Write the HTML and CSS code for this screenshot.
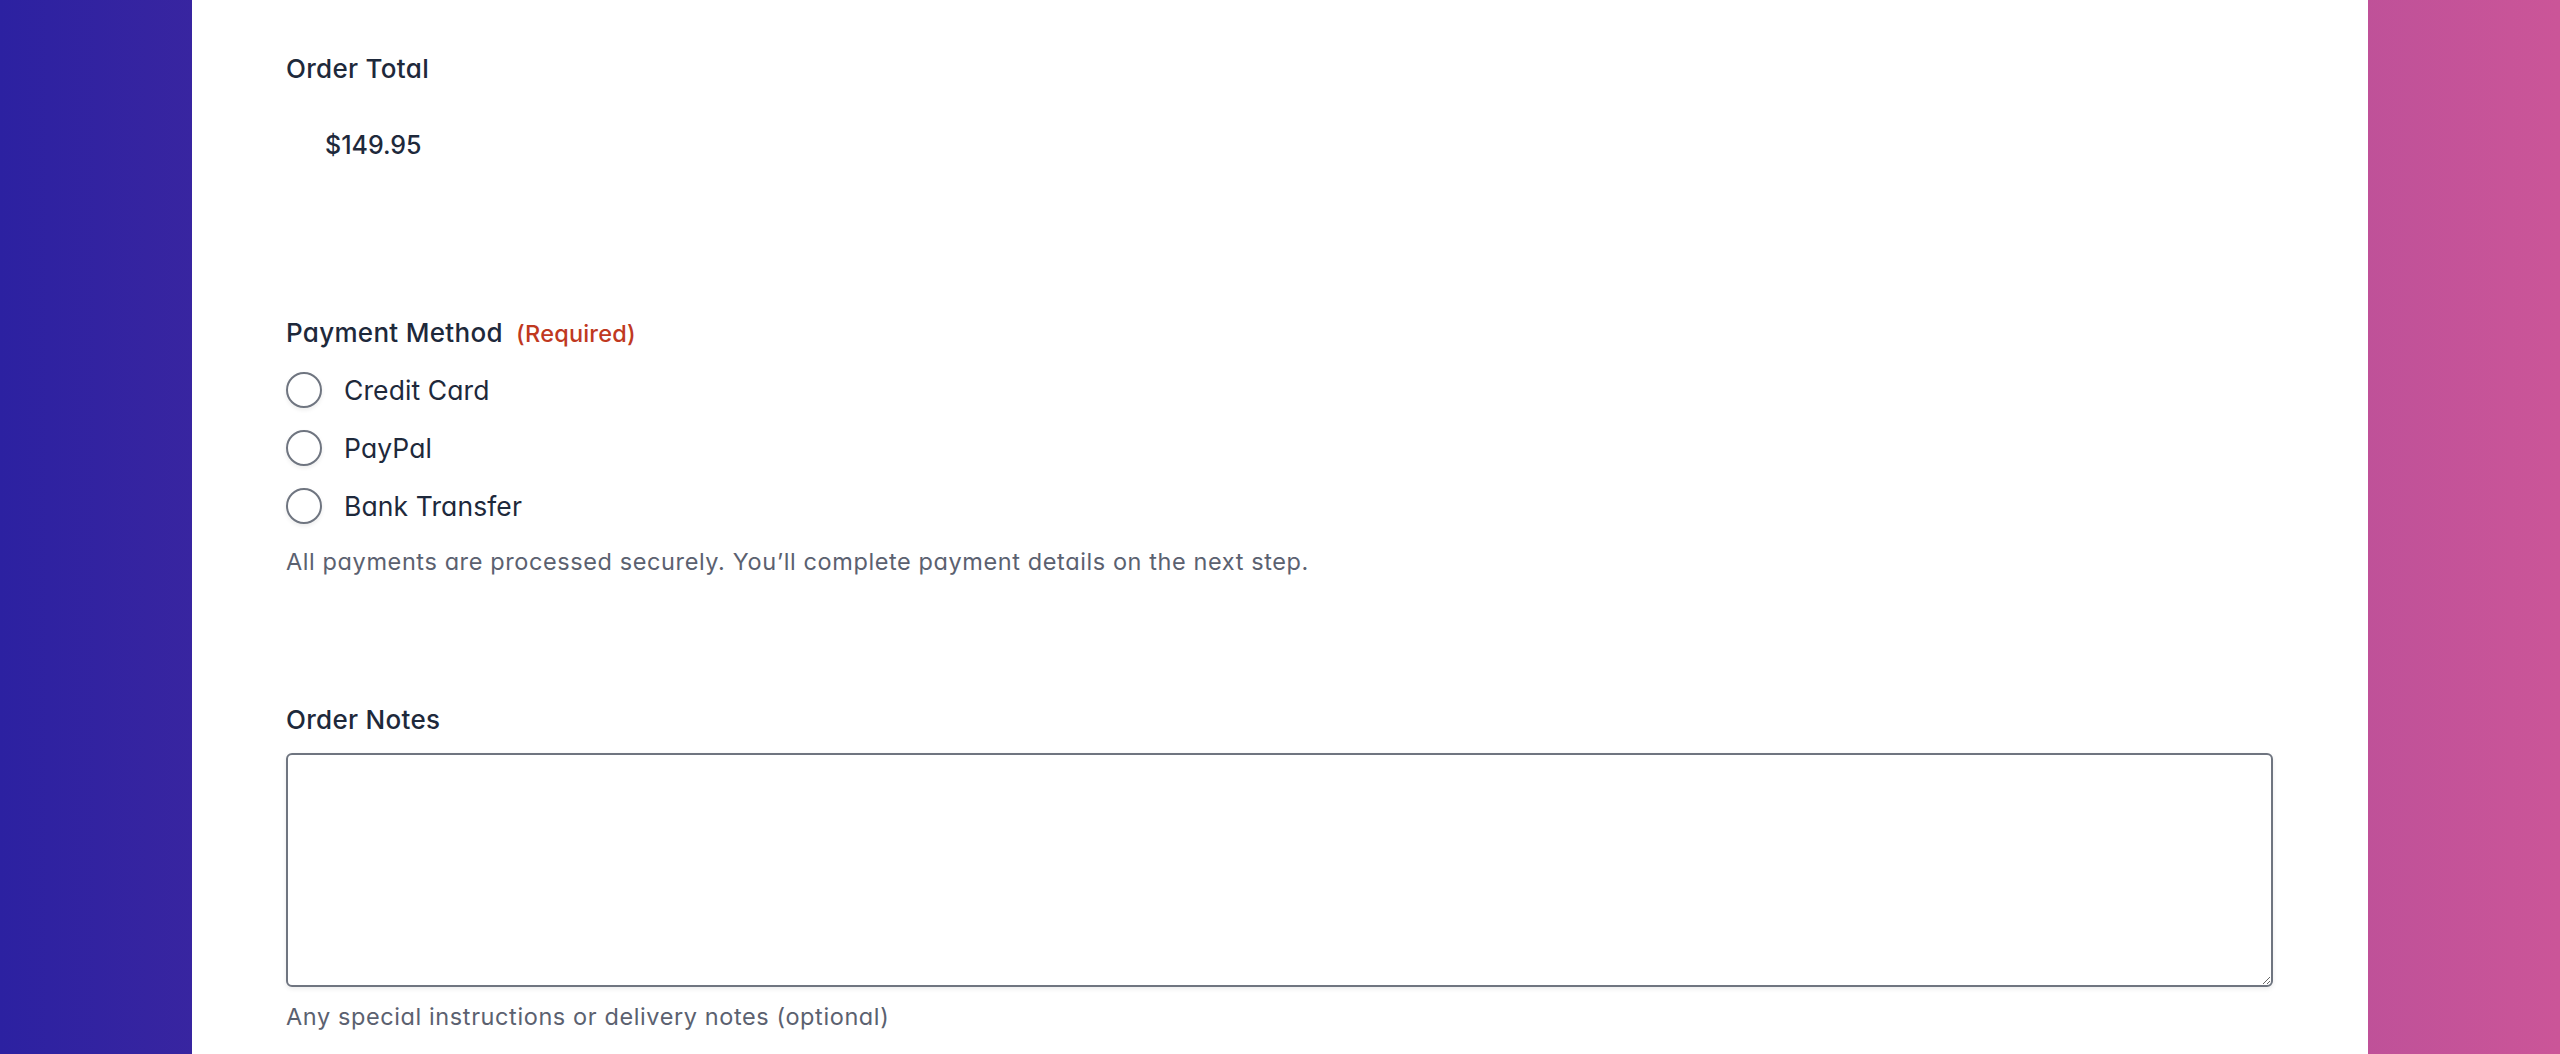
FILE: index.html
```html
<!DOCTYPE html>
<html lang="en">
<head>
<meta charset="utf-8">
<title>Checkout</title>
<link rel="stylesheet" href="styles.css">
</head>
<body>
<main class="card">
  <section class="field field-total">
    <div class="label">Order Total</div>
    <div class="amount">$149.95</div>
  </section>

  <fieldset class="field field-payment">
    <legend class="label">Payment Method <span class="required">(Required)</span></legend>
    <div class="options">
      <label class="option"><input type="radio" name="pay" class="radio"><span>Credit Card</span></label>
      <label class="option"><input type="radio" name="pay" class="radio"><span>PayPal</span></label>
      <label class="option"><input type="radio" name="pay" class="radio"><span>Bank Transfer</span></label>
    </div>
    <p class="help">All payments are processed securely. You’ll complete payment details on the next step.</p>
  </fieldset>

  <section class="field field-notes">
    <label class="label" for="notes">Order Notes</label>
    <textarea id="notes" class="notes"></textarea>
    <p class="help">Any special instructions or delivery notes (optional)</p>
  </section>
</main>
</body>
</html>
```

FILE: styles.css
```css
* { box-sizing: border-box; }

html, body {
  margin: 0;
  height: 100%;
}

body {
  background: linear-gradient(90deg, #2c21a1 0%, #cb5598 100%);
  font-family: Inter, "Noto Sans", "Liberation Sans", sans-serif;
  font-feature-settings: "cv11" 1;
  color: #1e293b;
  overflow: hidden;
}

.card {
  width: 85%;
  min-height: 100%;
  margin: 0 auto;
  background: #ffffff;
  padding: 49px 95px 0 94px;
  display: flex;
  flex-direction: column;
}

.field {
  margin: 0;
  padding: 0;
  border: 0;
  display: flex;
  flex-direction: column;
}

.label {
  display: block;
  font-size: 26px;
  font-weight: 500;
  line-height: 40px;
  padding: 0;
  letter-spacing: 0.3px;
}

.amount {
  margin-top: 36px;
  padding-left: 39px;
  font-size: 25px;
  font-weight: 500;
  line-height: 40px;
  letter-spacing: 0;
}

.field-payment {
  margin-top: 148px;
}

.required {
  color: #c0391f;
  font-size: 23.5px;
  font-weight: 500;
  margin-left: 6px;
  letter-spacing: 0.2px;
}

.options {
  margin-top: 7px;
  display: flex;
  flex-direction: column;
}

.option {
  display: flex;
  align-items: center;
  gap: 22px;
  height: 58px;
  font-size: 26.5px;
  font-weight: 400;
  letter-spacing: 0.1px;
  cursor: pointer;
}

.radio {
  appearance: none;
  -webkit-appearance: none;
  margin: 0;
  width: 36px;
  height: 36px;
  border: 2px solid #6f7580;
  border-radius: 50%;
  background: #ffffff;
  box-shadow: 0 2px 4px rgba(0, 0, 0, 0.08);
  flex: none;
}

.help {
  margin: 10px 0 0 0;
  font-size: 23.5px;
  line-height: 34px;
  color: #5b6170;
  letter-spacing: 0.6px;
}

.field-notes {
  margin-top: 121px;
}

.notes {
  margin-top: 13px;
  width: 100%;
  height: 234px;
  border: 2px solid #6f7580;
  border-radius: 6px;
  box-shadow: 0 2px 5px rgba(0, 0, 0, 0.08);
  font-family: inherit;
  font-size: 24px;
  padding: 10px 14px;
  resize: vertical;
  display: block;
}

.field-notes .help {
  margin-top: 13px;
}
```
